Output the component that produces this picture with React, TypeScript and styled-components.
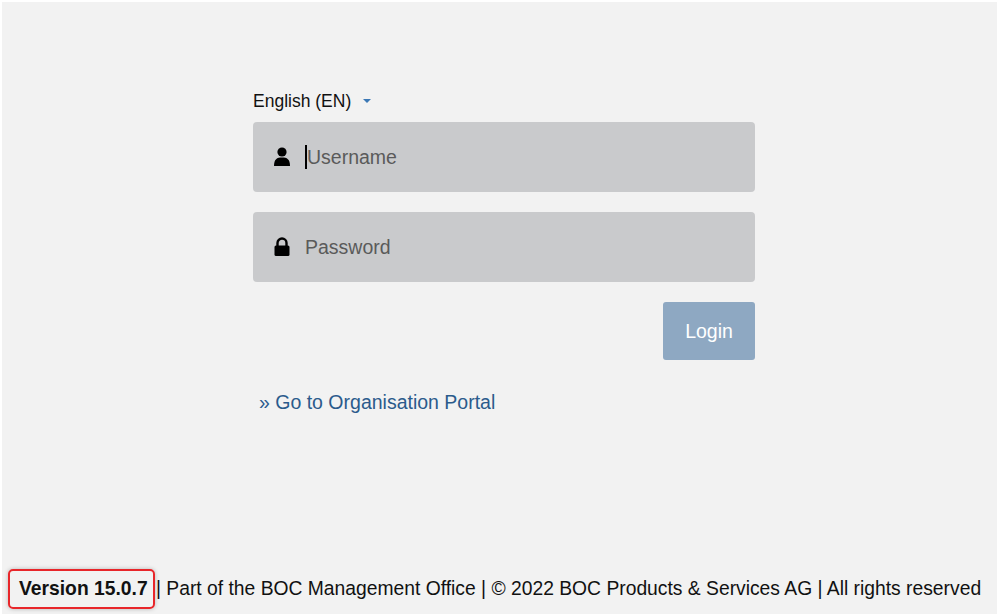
import React from "react";
import styled, { createGlobalStyle } from "styled-components";

const Global = createGlobalStyle`
  html, body { margin: 0; padding: 0; background: #fff; }
  body { font-family: "Liberation Sans", Arial, sans-serif; }
`;

const Page = styled.div`
  margin: 2px 0 0 2px;
  height: 612px;
  background: #f2f2f2;
  display: flex;
  flex-direction: column;
  box-sizing: border-box;
  overflow: hidden;
`;

const Main = styled.div`
  flex: 1;
  display: flex;
  padding-top: 88px;
  padding-left: 251px;
`;

const Form = styled.div`
  width: 502px;
  display: flex;
  flex-direction: column;
`;

const Lang = styled.div`
  font-size: 17.5px;
  color: #111;
  height: 22px;
  display: flex;
  align-items: center;
  gap: 12px;
  margin-bottom: 10px;
`;

const Caret = styled.span`
  width: 0;
  height: 0;
  border-left: 4px solid transparent;
  border-right: 4px solid transparent;
  border-top: 4px solid #3b78b5;
`;

const Field = styled.div`
  height: 70px;
  background: #c9cacc;
  border-radius: 4px;
  display: flex;
  align-items: center;
  padding-left: 20px;
  gap: 14px;
  margin-bottom: 20px;
  font-size: 19.5px;
  color: #5a5a5a;
`;

const Cursor = styled.span`
  width: 2px;
  height: 24px;
  background: #000;
  margin-right: -14px;
`;

const Actions = styled.div`
  display: flex;
  justify-content: flex-end;
`;

const Button = styled.button`
  width: 92px;
  height: 58px;
  background: #8ea8c2;
  border: none;
  border-radius: 3px;
  color: #fff;
  font-family: inherit;
  font-size: 19.5px;
`;

const Link = styled.a`
  margin-top: 31px;
  margin-left: 6px;
  font-size: 19.5px;
  color: #2b5b8c;
  text-decoration: none;
`;

const Footer = styled.div`
  display: flex;
  align-items: center;
  font-size: 19.3px;
  color: #111;
  padding: 0 0 5px 6px;
  white-space: nowrap;
`;

const Version = styled.span`
  font-weight: bold;
  border: 2px solid #e8262a;
  border-radius: 5px;
  padding: 7px 5px 7px 9px;
  margin-right: -4px;
  box-shadow: 0 0 4px rgba(0,0,0,0.25);
`;

const User = () => (
  <svg width="18" height="20" viewBox="0 0 18 20"><circle cx="9" cy="5" r="4.6" fill="#000" /><path d="M1 19 C1 12 4 10.5 9 10.5 C14 10.5 17 12 17 19 Z" fill="#000" /></svg>
);
const Lock = () => (
  <svg width="18" height="20" viewBox="0 0 18 20"><path d="M4.5 9 V6 a4.5 4.5 0 0 1 9 0 V9" stroke="#000" strokeWidth="2.4" fill="none" /><rect x="1.5" y="8.5" width="15" height="10.5" rx="1.5" fill="#000" /></svg>
);

export default function App() {
  return (
    <>
      <Global />
      <Page>
        <Main>
          <Form>
            <Lang>English (EN) <Caret /></Lang>
            <Field><User /><Cursor />Username</Field>
            <Field><Lock />Password</Field>
            <Actions><Button>Login</Button></Actions>
            <Link href="#">» Go to Organisation Portal</Link>
          </Form>
        </Main>
        <Footer>
          <Version>Version 15.0.7</Version>
          &nbsp;| Part of the BOC Management Office | © 2022 BOC Products &amp; Services AG | All rights reserved
        </Footer>
      </Page>
    </>
  );
}
